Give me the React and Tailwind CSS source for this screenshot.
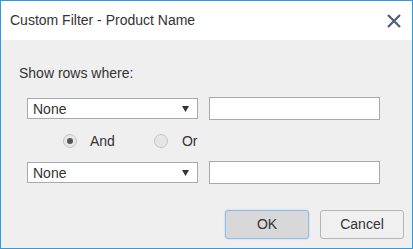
import React from "react";

function Select() {
  return (
    <div className="w-[171px] h-[21px] bg-white border border-[#a9a9a9] flex items-center justify-between pl-[5px] pr-[8px]">
      <span className="text-[14px] text-[#333] leading-none">None</span>
      <svg width="7" height="6" viewBox="0 0 7 6"><polygon points="0,0 7,0 3.5,6" fill="#333" /></svg>
    </div>
  );
}

function Input() {
  return <div className="w-[171px] h-[23px] bg-white border border-[#a9a9a9]" />;
}

function Radio({ checked }) {
  return (
    <div className="w-[14px] h-[14px] rounded-full border border-[#c4c4c4] bg-[#e6e6e6] flex items-center justify-center">
      {checked && <div className="w-[6px] h-[6px] rounded-full bg-[#555]" />}
    </div>
  );
}

export default function App() {
  return (
    <div
      className="w-[413px] h-[249px] border border-[#2f9ae0] bg-[#efefef] flex flex-col"
      style={{ fontFamily: '"Liberation Sans", Arial, sans-serif' }}
    >
      <div className="h-[39px] bg-white flex items-center justify-between pl-[9px] pr-[11px] shrink-0">
        <span className="text-[14px] text-[#333]">Custom Filter - Product Name</span>
        <svg width="14" height="14" viewBox="0 0 14 14">
          <path d="M1 1 L13 13 M13 1 L1 13" stroke="#4f5e78" strokeWidth="2.2" strokeLinecap="butt" />
        </svg>
      </div>
      <div className="flex-1 flex flex-col pl-[18px] pr-[8px]">
        <div className="mt-[25px] text-[14px] leading-[16px] text-[#333]">Show rows where:</div>
        <div className="mt-[16px] pl-[8px] flex items-center gap-[11px] h-[23px]">
          <Select />
          <Input />
        </div>
        <div className="mt-[14px] h-[14px] flex items-center pl-[44px]">
          <Radio checked />
          <span className="ml-[13px] text-[14px] text-[#333]">And</span>
          <div className="ml-[39px]"><Radio /></div>
          <span className="ml-[14px] text-[14px] text-[#333]">Or</span>
        </div>
        <div className="mt-[13px] pl-[8px] flex items-center gap-[11px] h-[23px]">
          <Select />
          <Input />
        </div>
        <div className="mt-[26px] flex justify-end gap-[11px]">
          <button className="w-[84px] h-[29px] rounded-[3px] bg-[#d8d8d8] border border-[#8fbde6] shadow-[0_0_2px_#a8cdee] text-[14px] text-[#333]">OK</button>
          <button className="w-[84px] h-[29px] rounded-[3px] bg-[#f0f0f0] border border-[#b4b4b4] text-[14px] text-[#333]">Cancel</button>
        </div>
      </div>
    </div>
  );
}
